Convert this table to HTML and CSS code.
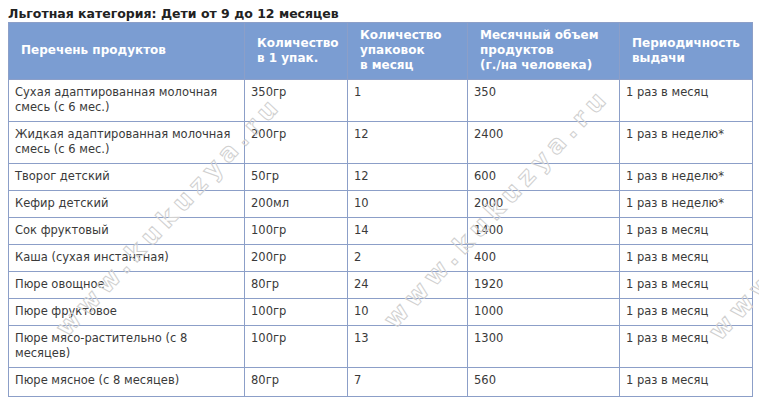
FILE: index.html
```html
<!DOCTYPE html>
<html lang="ru">
<head>
<meta charset="utf-8">
<title>Льготная категория</title>
<link rel="stylesheet" href="styles.css">
</head>
<body>
<div class="page">
  <h1 class="title">Льготная категория: Дети от 9 до 12 месяцев</h1>
  <table class="grid">
    <colgroup>
      <col class="c1"><col class="c2"><col class="c3"><col class="c4"><col class="c5">
    </colgroup>
    <thead>
      <tr>
        <th>Перечень продуктов</th>
        <th>Количество<br>в 1 упак.</th>
        <th>Количество<br>упаковок<br>в месяц</th>
        <th>Месячный объем<br>продуктов<br>(г./на человека)</th>
        <th>Периодичность<br>выдачи</th>
      </tr>
    </thead>
    <tbody>
      <tr><td>Сухая адаптированная молочная<br>смесь (с 6 мес.)</td><td>350гр</td><td>1</td><td>350</td><td>1 раз в месяц</td></tr>
      <tr><td>Жидкая адаптированная молочная<br>смесь (с 6 мес.)</td><td>200гр</td><td>12</td><td>2400</td><td>1 раз в неделю*</td></tr>
      <tr><td>Творог детский</td><td>50гр</td><td>12</td><td>600</td><td>1 раз в неделю*</td></tr>
      <tr><td>Кефир детский</td><td>200мл</td><td>10</td><td>2000</td><td>1 раз в неделю*</td></tr>
      <tr><td>Сок фруктовый</td><td>100гр</td><td>14</td><td>1400</td><td>1 раз в месяц</td></tr>
      <tr><td>Каша (сухая инстантная)</td><td>200гр</td><td>2</td><td>400</td><td>1 раз в месяц</td></tr>
      <tr><td>Пюре овощное</td><td>80гр</td><td>24</td><td>1920</td><td>1 раз в месяц</td></tr>
      <tr><td>Пюре фруктовое</td><td>100гр</td><td>10</td><td>1000</td><td>1 раз в месяц</td></tr>
      <tr><td>Пюре мясо-растительно (с 8<br>месяцев)</td><td>100гр</td><td>13</td><td>1300</td><td>1 раз в месяц</td></tr>
      <tr><td>Пюре мясное (с 8 месяцев)</td><td>80гр</td><td>7</td><td>560</td><td>1 раз в месяц</td></tr>
    </tbody>
  </table>
  <div class="wm wm-a" aria-hidden="true">www.kukuzya.ru</div>
  <div class="wm wm-b" aria-hidden="true">www.kukuzya.ru</div>
  <div class="wm wm-c" aria-hidden="true">www.kukuzya.ru</div>
</div>
</body>
</html>
```

FILE: styles.css
```css
html, body {
  margin: 0;
  padding: 0;
  background: #ffffff;
}

body {
  font-family: "DejaVu Sans", Verdana, sans-serif;
  font-size: 12px;
  color: #3a3a3a;
}

.page {
  position: relative;
  padding: 6px 8px 8px 8px;
  overflow: hidden;
  height: 390px;
}

.title {
  margin: 0;
  font-size: 12.5px;
  line-height: 16px;
  font-weight: bold;
  color: #222222;
}

.grid {
  border-collapse: collapse;
  table-layout: fixed;
  width: 744px;
}

.c1 { width: 236px; }
.c2 { width: 103px; }
.c3 { width: 120px; }
.c4 { width: 152px; }
.c5 { width: 133px; }

.grid th,
.grid td {
  border: 1px solid #8c9fc8;
  text-align: left;
  white-space: nowrap;
  overflow: hidden;
}

.grid th {
  background: #7b9dd2;
  color: #ffffff;
  font-weight: bold;
  font-size: 12px;
  line-height: 15px;
  padding: 5px 12px 6px 12px;
  vertical-align: middle;
}

.grid td {
  font-size: 11.5px;
  line-height: 15px;
  padding: 5px 6px 6px 6px;
  vertical-align: top;
}

.grid tbody tr:last-child td {
  padding-bottom: 8px;
}

.wm {
  position: absolute;
  font-family: "DejaVu Sans", Verdana, sans-serif;
  font-size: 25px;
  font-weight: bold;
  letter-spacing: 6px;
  color: rgba(255, 255, 255, 0);
  -webkit-text-stroke: 1px #d0d0d0;
  white-space: nowrap;
  transform-origin: 0 0;
  transform: rotate(-47deg);
  pointer-events: none;
}

.wm-a { left: 50px; top: 322px; }
.wm-b { left: 378px; top: 314px; }
.wm-c { left: 703px; top: 326px; }
```
